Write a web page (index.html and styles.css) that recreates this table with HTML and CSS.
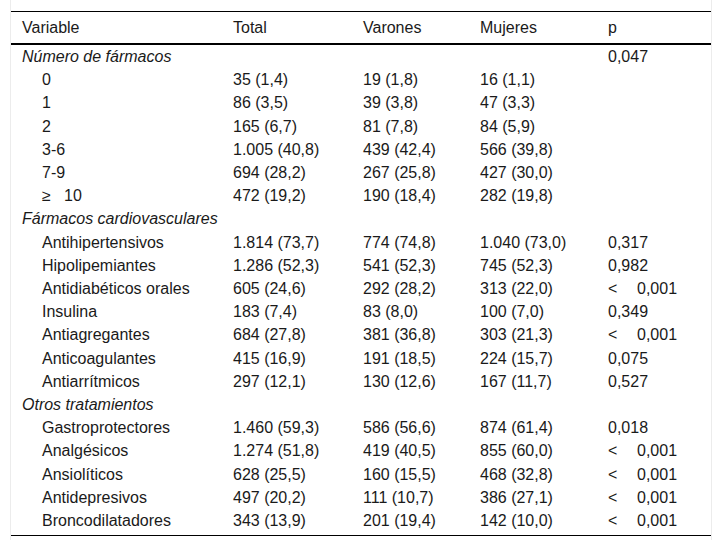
FILE: index.html
```html
<!DOCTYPE html>
<html lang="es">
<head>
<meta charset="utf-8">
<link rel="stylesheet" href="styles.css">
</head>
<body>
<div class="wrap">
<table class="tbl">
<colgroup>
<col class="c1"><col class="c2"><col class="c3"><col class="c4"><col class="c5">
</colgroup>
<thead>
<tr><th>Variable</th><th>Total</th><th>Varones</th><th>Mujeres</th><th>p</th></tr>
</thead>
<tbody>
<tr><td class="grp">Número de fármacos</td><td></td><td></td><td></td><td>0,047</td></tr>
<tr><td class="ind">0</td><td>35 (1,4)</td><td>19 (1,8)</td><td>16 (1,1)</td><td></td></tr>
<tr><td class="ind">1</td><td>86 (3,5)</td><td>39 (3,8)</td><td>47 (3,3)</td><td></td></tr>
<tr><td class="ind">2</td><td>165 (6,7)</td><td>81 (7,8)</td><td>84 (5,9)</td><td></td></tr>
<tr><td class="ind">3-6</td><td>1.005 (40,8)</td><td>439 (42,4)</td><td>566 (39,8)</td><td></td></tr>
<tr><td class="ind">7-9</td><td>694 (28,2)</td><td>267 (25,8)</td><td>427 (30,0)</td><td></td></tr>
<tr><td class="ind"><span class="ge">≥</span>10</td><td>472 (19,2)</td><td>190 (18,4)</td><td>282 (19,8)</td><td></td></tr>
<tr><td class="grp">Fármacos cardiovasculares</td><td></td><td></td><td></td><td></td></tr>
<tr><td class="ind">Antihipertensivos</td><td>1.814 (73,7)</td><td>774 (74,8)</td><td>1.040 (73,0)</td><td>0,317</td></tr>
<tr><td class="ind">Hipolipemiantes</td><td>1.286 (52,3)</td><td>541 (52,3)</td><td>745 (52,3)</td><td>0,982</td></tr>
<tr><td class="ind">Antidiabéticos orales</td><td>605 (24,6)</td><td>292 (28,2)</td><td>313 (22,0)</td><td><span class="lt">&lt;</span>0,001</td></tr>
<tr><td class="ind">Insulina</td><td>183 (7,4)</td><td>83 (8,0)</td><td>100 (7,0)</td><td>0,349</td></tr>
<tr><td class="ind">Antiagregantes</td><td>684 (27,8)</td><td>381 (36,8)</td><td>303 (21,3)</td><td><span class="lt">&lt;</span>0,001</td></tr>
<tr><td class="ind">Anticoagulantes</td><td>415 (16,9)</td><td>191 (18,5)</td><td>224 (15,7)</td><td>0,075</td></tr>
<tr><td class="ind">Antiarrítmicos</td><td>297 (12,1)</td><td>130 (12,6)</td><td>167 (11,7)</td><td>0,527</td></tr>
<tr><td class="grp">Otros tratamientos</td><td></td><td></td><td></td><td></td></tr>
<tr><td class="ind">Gastroprotectores</td><td>1.460 (59,3)</td><td>586 (56,6)</td><td>874 (61,4)</td><td>0,018</td></tr>
<tr><td class="ind">Analgésicos</td><td>1.274 (51,8)</td><td>419 (40,5)</td><td>855 (60,0)</td><td><span class="lt">&lt;</span>0,001</td></tr>
<tr><td class="ind">Ansiolíticos</td><td>628 (25,5)</td><td>160 (15,5)</td><td>468 (32,8)</td><td><span class="lt">&lt;</span>0,001</td></tr>
<tr><td class="ind">Antidepresivos</td><td>497 (20,2)</td><td>111 (10,7)</td><td>386 (27,1)</td><td><span class="lt">&lt;</span>0,001</td></tr>
<tr class="last"><td class="ind">Broncodilatadores</td><td>343 (13,9)</td><td>201 (19,4)</td><td>142 (10,0)</td><td><span class="lt">&lt;</span>0,001</td></tr>
</tbody>
</table>
</div>
</body>
</html>
```

FILE: styles.css
```css
html, body {
  margin: 0;
  padding: 0;
  background: #fff;
}
body {
  font-family: "Liberation Sans", Arial, sans-serif;
  font-size: 16px;
  color: #1a1a1a;
}
.wrap {
  margin: 0 10px;
  padding: 11px 0 4px;
  border-left: 1px solid #ececec;
  border-right: 1px solid #ececec;
}
.tbl {
  width: 700px;
  border-collapse: collapse;
  table-layout: fixed;
  border-top: 1px solid #000;
  border-bottom: 1px solid #000;
}
.c1 { width: 211px; }
.c2 { width: 130px; }
.c3 { width: 117px; }
.c4 { width: 128px; }
.c5 { width: 114px; }
.tbl th {
  font-weight: normal;
  text-align: left;
  padding: 6px 0 6px 11px;
  line-height: 19px;
  border-bottom: 2px solid #000;
}
.tbl td {
  padding: 2px 0 2px 11px;
  line-height: 19.2px;
  white-space: nowrap;
  vertical-align: top;
}
.tbl .last td {
  padding-bottom: 5px;
}
.tbl td.grp {
  font-style: italic;
}
.tbl td.ind {
  padding-left: 31px;
}
.ge {
  display: inline-block;
  width: 22px;
}
.lt {
  display: inline-block;
  width: 29px;
}
```
